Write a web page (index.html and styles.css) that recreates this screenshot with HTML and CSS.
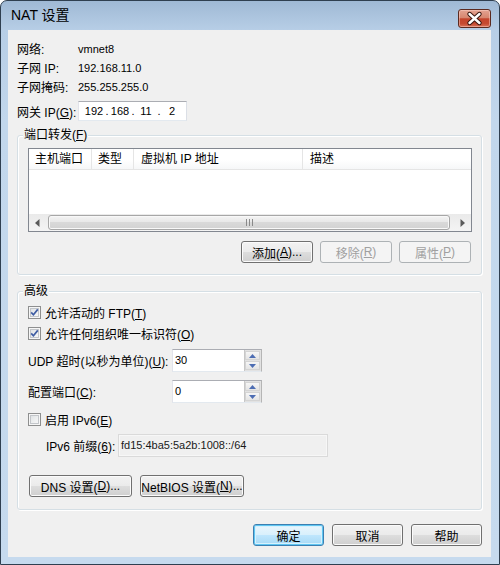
FILE: index.html
```html
<!DOCTYPE html>
<html lang="zh-CN">
<head>
<meta charset="utf-8">
<title>NAT 设置</title>
<link rel="stylesheet" href="styles.css">
</head>
<body>
<div class="window">
  <div class="titlebar">
    <span class="title">NAT 设置</span>
    <div class="close">
      <svg width="31" height="17" viewBox="0 0 31 17">
        <path d="M10.5 4 L20.5 13 M20.5 4 L10.5 13" stroke="#3a1710" stroke-width="4.4" stroke-linecap="round"/>
        <path d="M10.5 4 L20.5 13 M20.5 4 L10.5 13" stroke="#ffffff" stroke-width="2.4" stroke-linecap="round"/>
      </svg>
    </div>
  </div>
  <div class="client">
    <div class="info">
      <div class="row"><span class="lbl">网络:</span><span class="v">vmnet8</span></div>
      <div class="row"><span class="lbl">子网 IP:</span><span class="v">192.168.11.0</span></div>
      <div class="row"><span class="lbl">子网掩码:</span><span class="v">255.255.255.0</span></div>
      <div class="row gw"><span class="lbl">网关 IP(<u>G</u>):</span>
        <div class="ipbox"><span class="oct">192</span><span class="dot">.</span><span class="oct">168</span><span class="dot">.</span><span class="oct">11</span><span class="dot">.</span><span class="oct">2</span></div>
      </div>
    </div>

    <div class="group g1">
      <span class="legend">端口转发(<u>F</u>)</span>
      <div class="list">
        <div class="lhead">
          <span class="c1">主机端口</span><span class="c2">类型</span><span class="c3">虚拟机 IP 地址</span><span class="c4">描述</span>
        </div>
        <div class="lbody"></div>
        <div class="hscroll">
          <div class="arrow"><svg width="5" height="8" viewBox="0 0 5 8"><path d="M4.5 0 L0 4 L4.5 8 Z" fill="#5a5a5a"/></svg></div>
          <div class="thumb"><svg width="7" height="7" viewBox="0 0 7 7"><path d="M0.5 0 V7 M3.5 0 V7 M6.5 0 V7" stroke="#8a8a8a" stroke-width="1"/></svg></div>
          <div class="arrow"><svg width="5" height="8" viewBox="0 0 5 8"><path d="M0.5 0 L5 4 L0.5 8 Z" fill="#5a5a5a"/></svg></div>
        </div>
      </div>
      <div class="btnrow">
        <div class="btn w72">添加(<u>A</u>)...</div>
        <div class="btn w72 dis">移除(<u>R</u>)</div>
        <div class="btn w72 dis">属性(<u>P</u>)</div>
      </div>
    </div>

    <div class="group g2">
      <span class="legend">高级</span>
      <div class="chk">
        <span class="cb"><svg width="9" height="9" viewBox="0 0 9 9"><path d="M1.2 4.4 L3.4 6.8 L7.8 1.4" fill="none" stroke="#3f5da3" stroke-width="1.7"/></svg></span>
        <span>允许活动的 FTP(<u>T</u>)</span>
      </div>
      <div class="chk c2row">
        <span class="cb"><svg width="9" height="9" viewBox="0 0 9 9"><path d="M1.2 4.4 L3.4 6.8 L7.8 1.4" fill="none" stroke="#3f5da3" stroke-width="1.7"/></svg></span>
        <span>允许任何组织唯一标识符(<u>O</u>)</span>
      </div>
      <div class="field f1">
        <span class="flbl">UDP 超时(以秒为单位)(<u>U</u>):</span>
        <div class="spin">
          <span class="val v">30</span>
          <div class="ud">
            <span class="udb"><svg width="7" height="4" viewBox="0 0 7 4"><path d="M0 4 L3.5 0 L7 4 Z" fill="#4d6db3"/></svg></span>
            <span class="udb"><svg width="7" height="4" viewBox="0 0 7 4"><path d="M0 0 L3.5 4 L7 0 Z" fill="#4d6db3"/></svg></span>
          </div>
        </div>
      </div>
      <div class="field f2">
        <span class="flbl">配置端口(<u>C</u>):</span>
        <div class="spin">
          <span class="val v">0</span>
          <div class="ud">
            <span class="udb"><svg width="7" height="4" viewBox="0 0 7 4"><path d="M0 4 L3.5 0 L7 4 Z" fill="#4d6db3"/></svg></span>
            <span class="udb"><svg width="7" height="4" viewBox="0 0 7 4"><path d="M0 0 L3.5 4 L7 0 Z" fill="#4d6db3"/></svg></span>
          </div>
        </div>
      </div>
      <div class="chk c3row">
        <span class="cb"></span>
        <span>启用 IPv6(<u>E</u>)</span>
      </div>
      <div class="field f3">
        <span class="plbl">IPv6 前缀(<u>6</u>):</span>
        <div class="ro v">fd15:4ba5:5a2b:1008::/64</div>
      </div>
      <div class="btnrow2">
        <div class="btn w103">DNS 设置(<u>D</u>)...</div>
        <div class="btn w104">NetBIOS 设置(<u>N</u>)...</div>
      </div>
    </div>

    <div class="footer">
      <div class="btn w71 def">确定</div>
      <div class="btn w71">取消</div>
      <div class="btn w71">帮助</div>
    </div>
  </div>
</div>
</body>
</html>
```

FILE: styles.css
```css
* { box-sizing: border-box; }

body {
  margin: 0;
  font-family: "Liberation Sans", "Noto Sans CJK SC", sans-serif;
  font-size: 12px;
  color: #000;
  background: #ffffff;
}

u { text-decoration: underline; }

.window {
  width: 500px;
  height: 565px;
  border: 1px solid #2f3f50;
  border-radius: 7px 7px 0 0;
  background: linear-gradient(#9fb9d5 0, #b7cee6 29px, #c2d7ec 120px, #c6daee 100%);
  display: flex;
  flex-direction: column;
  overflow: hidden;
}

.titlebar {
  height: 29px;
  display: flex;
  justify-content: space-between;
  align-items: flex-start;
  padding-left: 10px;
}

.title {
  font-size: 14px;
  line-height: 29px;
  color: #000;
}

.close {
  width: 33px;
  height: 19px;
  margin-top: 8px;
  margin-right: 8px;
  border: 1px solid #5b2a20;
  border-radius: 3px;
  background: linear-gradient(#e4a392 0, #d7866f 45%, #c4442c 52%, #c54a31 80%, #d9735a 100%);
  box-shadow: inset 0 0 0 1px rgba(255, 220, 210, 0.45);
  display: flex;
}

.client {
  flex: 1;
  margin: 0 8px 7px 7px;
  background: #f0f0f0;
  display: flex;
  flex-direction: column;
}

/* info rows */
.info {
  padding: 9px 0 0 9px;
}

.row {
  display: flex;
  align-items: center;
  height: 19px;
}

.row.gw {
  height: 20px;
  margin-top: 5px;
}

.lbl {
  width: 61px;
}

.v {
  font-size: 11px;
}

.ipbox {
  width: 109px;
  height: 20px;
  border: 1px solid #abadb3;
  border-left-color: #e2e3ea;
  border-right-color: #dbdfe6;
  border-bottom-color: #e3e9ef;
  background: #fff;
  display: flex;
  align-items: center;
  padding-left: 5px;
  font-size: 11px;
}

.oct {
  width: 20px;
  text-align: center;
}

.dot {
  width: 6px;
  text-align: center;
}

/* group boxes */
.group {
  position: relative;
  margin: 14px 9px 0 9px;
  border: 1px solid #d5dfe5;
  border-radius: 3px;
  box-shadow: inset 1px 1px 0 #ffffff, 1px 1px 0 #ffffff;
}

.legend {
  position: absolute;
  top: -9px;
  left: 5px;
  padding: 0 1px;
  background: #f0f0f0;
  line-height: 16px;
}

.g1 {
  padding: 12px 9px 11px 10px;
}

.list {
  height: 84px;
  border: 1px solid #828790;
  background: #fff;
  display: flex;
  flex-direction: column;
}

.lhead {
  display: flex;
  height: 21px;
  border-bottom: 1px solid #e5e5e5;
  background: linear-gradient(#ffffff 0, #ffffff 55%, #f6f7f8 100%);
}

.lhead span {
  line-height: 20px;
  padding-left: 6px;
  border-right: 1px solid #e5e5e5;
}

.lhead .c1 { width: 63px; }
.lhead .c2 { width: 42px; }
.lhead .c3 { width: 169px; padding-left: 7px; }
.lhead .c4 { flex: 1; border-right: none; padding-left: 7px; }

.lbody {
  flex: 1;
}

.hscroll {
  height: 17px;
  display: flex;
  background: linear-gradient(#eaeaea, #f4f4f4);
}

.arrow {
  width: 17px;
  display: flex;
  align-items: center;
  justify-content: center;
}

.thumb {
  flex: 1;
  margin: 1px 4px 1px 2px;
  border: 1px solid #a7a7a7;
  border-radius: 3px;
  background: linear-gradient(#f4f4f4 0, #e8e8e8 45%, #d9d9d9 50%, #d2d2d2 100%);
  box-shadow: inset 0 0 0 1px #f8f8f8;
  display: flex;
  align-items: center;
  justify-content: center;
}

.btnrow {
  display: flex;
  justify-content: flex-end;
  gap: 7px;
  margin-top: 9px;
  padding-right: 1px;
}

.btn {
  height: 22px;
  border: 1px solid #707070;
  border-radius: 3px;
  background: linear-gradient(#f2f2f2 0, #ebebeb 48%, #dddddd 52%, #cfcfcf 100%);
  box-shadow: inset 0 0 0 1px #fbfbfb;
  display: flex;
  align-items: center;
  justify-content: center;
  white-space: nowrap;
}

.btn.w72 { width: 72px; }
.btn.w71 { width: 71px; }
.btn.w103 { width: 103px; }
.btn.w104 { width: 104px; }

.btn.dis {
  border-color: #adb2b5;
  background: #f4f4f4;
  box-shadow: none;
  color: #a0a0a0;
}

.btn.def {
  border-color: #3c7fb1;
  background: linear-gradient(#eaf6fd 0, #d9f0fc 48%, #bee6fd 52%, #a7d9f5 100%);
  box-shadow: inset 0 0 0 1px #5fc6f2, inset 0 0 0 2px #d6f1fd;
}

/* advanced */
.g2 {
  margin-top: 16px;
  padding: 11px 9px 12px 10px;
}

.chk {
  display: flex;
  align-items: center;
  height: 19px;
  gap: 4px;
}

.chk.c2row { margin-top: 2px; }
.chk.c3row { margin-top: 7px; }

.cb {
  width: 13px;
  height: 13px;
  border: 1px solid #8e8f8f;
  background: linear-gradient(135deg, #d9dcdf 0, #eceeef 50%, #fbfbfb 100%);
  box-shadow: inset 0 0 0 1px #f6f6f6, inset 0 0 0 2px #c3c6ca;
  display: flex;
  align-items: center;
  justify-content: center;
  flex: none;
}

.field {
  display: flex;
  align-items: center;
}

.field.f1 { margin-top: 6px; }
.field.f2 { margin-top: 8px; }
.field.f3 { margin-top: 5px; padding-left: 18px; }

.flbl { width: 144px; }
.plbl { width: 72px; }

.spin {
  width: 90px;
  height: 23px;
  border: 1px solid #abadb3;
  border-left-color: #e2e3ea;
  border-right-color: #b5b5b5;
  border-bottom-color: #e3e9ef;
  background: #fff;
  display: flex;
}

.spin .val {
  flex: 1;
  padding: 3px 0 0 2px;
  line-height: 14px;
}

.ud {
  width: 17px;
  display: flex;
  flex-direction: column;
  gap: 1px;
  padding: 1px 1px 1px 0;
  background: #e2e2e2;
  border-left: 1px solid #c7c7c7;
}

.udb {
  flex: 1;
  border: 1px solid #d4d4d4;
  background: linear-gradient(#f6f6f6, #e4e4e4);
  display: flex;
  align-items: center;
  justify-content: center;
}

.ro {
  width: 210px;
  height: 23px;
  border: 1px solid #dadada;
  background: #f0f0f0;
  box-shadow: inset 0 0 0 1px #f7f7f7;
  padding: 3px 0 0 2px;
  line-height: 14px;
  color: #1a1a1a;
}

.btnrow2 {
  display: flex;
  gap: 8px;
  margin-top: 18px;
  padding-left: 1px;
}

.footer {
  display: flex;
  justify-content: flex-end;
  gap: 8px;
  margin-top: 14px;
  padding-right: 9px;
}
```
